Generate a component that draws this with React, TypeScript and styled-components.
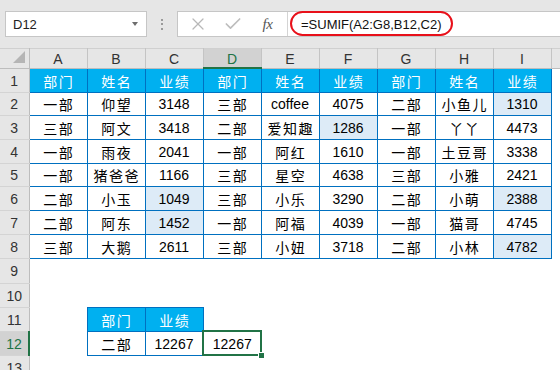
import React from "react";
import styled, { createGlobalStyle, css } from "styled-components";
import { X, Check } from "lucide-react";

type CellKind = "blank" | "head" | "data";

interface CellSpec {
  text: string;
  kind: CellKind;
  marked?: boolean;
  selected?: boolean;
}

const COLUMNS = ["A", "B", "C", "D", "E", "F", "G", "H", "I", "J"];
const ROW_HEIGHTS = [24, 23, 24, 24, 23, 24, 24, 24, 25, 24, 24, 24, 24];
const ACTIVE_COL = "D";
const ACTIVE_ROW = 12;

const HEADER = ["部门", "姓名", "业绩"];
const RECORDS = [
  ["一部", "仰望", "3148", "三部", "coffee", "4075", "二部", "小鱼儿", "1310"],
  ["三部", "阿文", "3418", "二部", "爱知趣", "1286", "一部", "丫丫", "4473"],
  ["一部", "雨夜", "2041", "一部", "阿红", "1610", "一部", "土豆哥", "3338"],
  ["一部", "猪爸爸", "1166", "三部", "星空", "4638", "三部", "小雅", "2421"],
  ["二部", "小玉", "1049", "三部", "小乐", "3290", "二部", "小萌", "2388"],
  ["二部", "阿东", "1452", "一部", "阿福", "4039", "一部", "猫哥", "4745"],
  ["三部", "大鹅", "2611", "三部", "小妞", "3718", "二部", "小林", "4782"],
];
// cells picked up by the SUMIF ("row-colIndex")
const MARKED = new Set(["2-8", "3-5", "6-2", "7-2", "6-8", "8-8"]);

const blank = (): CellSpec => ({ text: "", kind: "blank" });

function buildSheet(): CellSpec[][] {
  const rows: CellSpec[][] = [];
  rows.push([...HEADER, ...HEADER, ...HEADER, ""].map((t, i) => (i < 9 ? { text: t, kind: "head" } : blank())));
  RECORDS.forEach((rec, r) => {
    const rowNo = r + 2;
    rows.push(
      [...rec, ""].map((t, c) =>
        c < 9 ? { text: t, kind: "data", marked: MARKED.has(`${rowNo}-${c}`) } : blank()
      )
    );
  });
  rows.push(COLUMNS.map(blank), COLUMNS.map(blank));
  rows.push(COLUMNS.map((_, c) => (c === 1 ? { text: "部门", kind: "head" } : c === 2 ? { text: "业绩", kind: "head" } : blank())));
  rows.push(
    COLUMNS.map((_, c) =>
      c === 1
        ? { text: "二部", kind: "data" }
        : c === 2
        ? { text: "12267", kind: "data" }
        : c === 3
        ? { text: "12267", kind: "blank", selected: true }
        : blank()
    )
  );
  rows.push(COLUMNS.map(blank));
  return rows;
}

const isCjk = (s: string) => /[\u4e00-\u9fff]/.test(s);

const GlobalStyle = createGlobalStyle`
  html, body {
    margin: 0;
    padding: 0;
    background: #fff;
  }
  body {
    font-family: "Liberation Sans", "Noto Sans CJK SC", sans-serif;
    color: #000;
  }
`;

const Window = styled.div`
  width: 560px;
  height: 370px;
  overflow: hidden;
  background: #fff;
  display: flex;
  flex-direction: column;
  align-items: flex-start;
`;

const FormulaBar = styled.div`
  flex: none;
  align-self: stretch;
  height: 48px;
  box-sizing: border-box;
  padding: 11px 0 0 5px;
  background: #e6e6e6;
  display: flex;
  align-items: flex-start;
`;

const NameBox = styled.div`
  width: 142px;
  height: 26px;
  box-sizing: border-box;
  background: #fff;
  border: 1px solid #c6c6c6;
  display: flex;
  align-items: center;
  justify-content: space-between;
  padding: 0 8px 0 7px;
  font-size: 13px;
  color: #222;
`;

const Caret = styled.span`
  width: 0;
  height: 0;
  border-left: 3.5px solid transparent;
  border-right: 3.5px solid transparent;
  border-top: 4px solid #6d6d6d;
`;

const Grip = styled.div`
  width: 30px;
  height: 26px;
  display: flex;
  flex-direction: column;
  align-items: center;
  justify-content: center;
  gap: 2.5px;

  span {
    width: 2px;
    height: 2px;
    background: #9a9a9a;
  }
`;

const InputBox = styled.div`
  flex: 1;
  height: 26px;
  box-sizing: border-box;
  background: #fff;
  border: 1px solid #c6c6c6;
  border-right: none;
  display: flex;
`;

const ActionArea = styled.div`
  width: 110px;
  box-sizing: border-box;
  padding-left: 2px;
  border-right: 1px solid #d4d4d4;
  display: flex;
`;

const ActionSlot = styled.span<{ $tone?: string }>`
  width: 35px;
  display: flex;
  align-items: center;
  justify-content: center;
  color: ${(p) => p.$tone ?? "#b8b8b8"};
`;

const FxLabel = styled.span`
  font-family: "Liberation Serif", serif;
  font-style: italic;
  font-size: 15px;
  color: #555;
  letter-spacing: -0.5px;
`;

const FormulaArea = styled.div`
  flex: 1;
  padding-left: 2px;
  display: flex;
  align-items: flex-start;
`;

const Annotation = styled.span`
  margin-top: -1px;
  height: 25px;
  box-sizing: border-box;
  border: 2px solid #e8101a;
  border-radius: 13px;
  padding: 1px 9px 0;
  display: flex;
  align-items: center;
  font-size: 13px;
  color: #111;
`;

const Sheet = styled.table`
  flex: none;
  border-collapse: collapse;
  table-layout: fixed;
  width: 609px;
  min-width: 609px;
  font-size: 14px;
`;

const Col = styled.col<{ $w: number }>`
  width: ${(p) => p.$w}px;
`;

const Row = styled.tr<{ $h: number }>`
  height: ${(p) => p.$h}px;
`;

const headBase = css`
  background: #e6e6e6;
  color: #333;
  font-weight: 400;
  font-size: 14px;
  padding: 0;
  text-align: center;
`;

const Corner = styled.th`
  ${headBase};
  border-right: 1px solid #bdbdbd;
  border-bottom: 1px solid #bdbdbd;
  border-top: 1px solid #d0d0d0;

  div {
    display: flex;
    justify-content: flex-end;
    align-items: flex-end;
    padding: 0 4px 3px 0;
  }
`;

const ColHead = styled.th<{ $active?: boolean }>`
  ${headBase};
  padding-top: 2px;
  border-top: 1px solid #d0d0d0;
  border-right: 1px solid #c4c4c4;
  border-bottom: 1px solid #bdbdbd;
  ${(p) =>
    p.$active &&
    css`
      background: #d2d2d2;
      color: #217346;
      border-bottom: 2px solid #217346;
    `}
`;

const RowHead = styled.th<{ $active?: boolean }>`
  ${headBase};
  padding-top: 1px;
  border-right: 1px solid #bdbdbd;
  border-bottom: 1px solid #d4d4d4;
  ${(p) =>
    p.$active &&
    css`
      background: #d2d2d2;
      color: #217346;
      border-right: 2px solid #217346;
    `}
`;

const Cell = styled.td<{ $kind: CellKind; $marked?: boolean; $cjk?: boolean; $selected?: boolean }>`
  padding: 1px 0 0;
  text-align: center;
  vertical-align: middle;
  white-space: nowrap;
  border: none;
  ${(p) =>
    p.$cjk &&
    css`
      letter-spacing: 1.5px;
      padding-left: 1.5px;
    `}
  ${(p) =>
    p.$kind === "head" &&
    css`
      background: #00b0f0;
      color: #fff;
      border: 1px solid #0070c0;
    `}
  ${(p) =>
    p.$kind === "data" &&
    css`
      background: ${p.$marked ? "#ddebf7" : "#fff"};
      border: 1px solid #0070c0;
    `}
  ${(p) =>
    p.$selected &&
    css`
      position: relative;

      &::after {
        content: "";
        position: absolute;
        top: -1px;
        left: -2px;
        right: -1px;
        bottom: -1px;
        border: 2px solid #217346;
        pointer-events: none;
      }

      &::before {
        content: "";
        position: absolute;
        right: -4px;
        bottom: -4px;
        width: 5px;
        height: 5px;
        background: #217346;
        border: 1px solid #fff;
        z-index: 1;
      }
    `}
`;

const sheet = buildSheet();

export default function App() {
  return (
    <Window>
      <GlobalStyle />
      <FormulaBar>
        <NameBox>
          <span>D12</span>
          <Caret />
        </NameBox>
        <Grip>
          <span />
          <span />
          <span />
        </Grip>
        <InputBox>
          <ActionArea>
            <ActionSlot>
              <X size={20} strokeWidth={1.5} />
            </ActionSlot>
            <ActionSlot $tone="#bdbdbd">
              <Check size={20} strokeWidth={2} />
            </ActionSlot>
            <ActionSlot>
              <FxLabel>fx</FxLabel>
            </ActionSlot>
          </ActionArea>
          <FormulaArea>
            <Annotation>=SUMIF(A2:G8,B12,C2)</Annotation>
          </FormulaArea>
        </InputBox>
      </FormulaBar>

      <Sheet>
        <colgroup>
          <Col $w={29} />
          {COLUMNS.map((c) => (
            <Col key={c} $w={58} />
          ))}
        </colgroup>
        <thead>
          <Row $h={19}>
            <Corner>
              <div>
                <svg width="12" height="12" viewBox="0 0 12 12">
                  <polygon points="12,0 12,12 0,12" fill="#b5b5b5" />
                </svg>
              </div>
            </Corner>
            {COLUMNS.map((c) => (
              <ColHead key={c} $active={c === ACTIVE_COL}>
                {c}
              </ColHead>
            ))}
          </Row>
        </thead>
        <tbody>
          {sheet.map((cells, r) => (
            <Row key={r} $h={ROW_HEIGHTS[r]}>
              <RowHead $active={r + 1 === ACTIVE_ROW}>{r + 1}</RowHead>
              {cells.map((cell, c) => (
                <Cell
                  key={c}
                  $kind={cell.kind}
                  $marked={cell.marked}
                  $selected={cell.selected}
                  $cjk={isCjk(cell.text)}
                >
                  {cell.text}
                </Cell>
              ))}
            </Row>
          ))}
        </tbody>
      </Sheet>
    </Window>
  );
}
